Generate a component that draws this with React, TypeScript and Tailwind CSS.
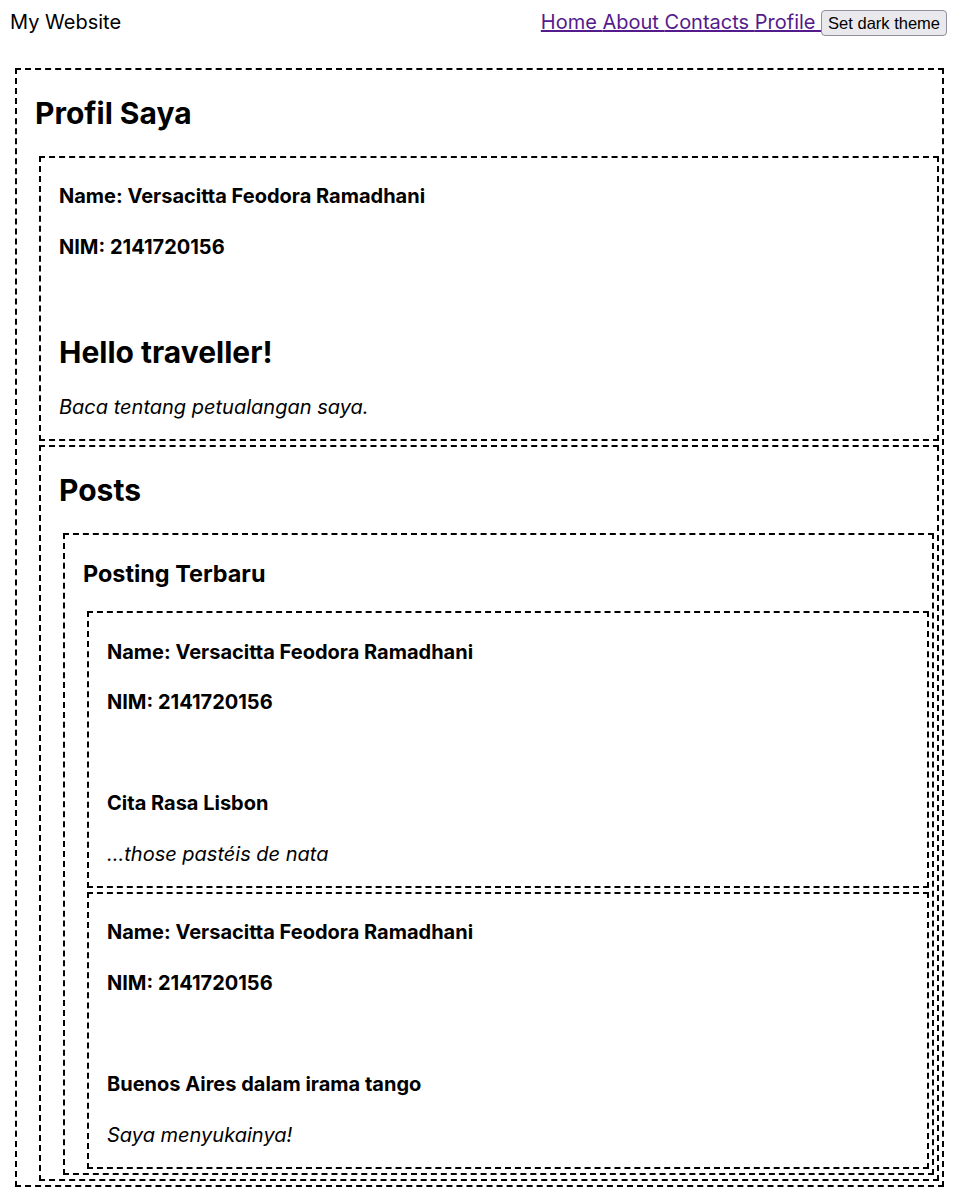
import type { ReactNode } from "react"

const profile = { name: "Versacitta Feodora Ramadhani", nim: "2141720156" }

const posts = [
    { title: "Cita Rasa Lisbon", body: "...those pastéis de nata" },
    { title: "Buenos Aires dalam irama tango", body: "Saya menyukainya!" },
]

function Box({ children }: { children: ReactNode }) {
    return <div className="border-2 border-dashed border-black ml-[4px] mr-[3px] my-[4px] pl-[18px]">{children}</div>
}

function Identity() {
    return (
        <>
            <h4 className="text-[20px] leading-[normal] font-bold my-[26.6px]">Name: {profile.name}</h4>
            <h4 className="text-[20px] leading-[normal] font-bold my-[26.6px]">NIM: {profile.nim}</h4>
            <div className="text-[20px] leading-[normal]">
                <br />
            </div>
        </>
    )
}

export default function App() {
    return (
        <div className="font-['Inter',sans-serif] text-black bg-white min-h-screen">
            {/* top bar */}
            <header className="flex justify-between items-baseline px-[10px] pt-[7px] h-[36px]">
                <span className="text-[20px] leading-[30px]">My Website</span>
                <nav className="text-[20px] leading-[30px]">
                    <a href="#" className="text-[#551a8b] underline">{"Home "}</a>
                    <a href="#" className="text-[#551a8b] underline">{"About "}</a>
                    <a href="#" className="text-[#551a8b] underline">{"Contacts "}</a>
                    <a href="#" className="text-[#551a8b] underline">{"Profile "}</a>
                    <button className="font-['Liberation_Sans',Arial,sans-serif] text-[16.5px] leading-[20px] bg-[#e9e9ed] border border-[#8f8f9d] rounded-[4px] px-[6px] py-[2px] text-black align-baseline">
                        Set dark theme
                    </button>
                </nav>
            </header>

            <div className="pl-[11px] pr-[10px] pt-[28px]">
                <Box>
                    <h2 className="text-[30px] leading-[normal] font-bold my-[24.9px]">Profil Saya</h2>
                    <Box>
                        <Identity />
                        <h2 className="text-[30px] leading-[normal] font-bold my-[24.9px]">Hello traveller!</h2>
                        <p className="text-[20px] leading-[normal] italic my-[20px]">Baca tentang petualangan saya.</p>
                    </Box>
                    <Box>
                        <h2 className="text-[30px] leading-[normal] font-bold my-[24.9px]">Posts</h2>
                        <Box>
                            <h3 className="text-[23.4px] leading-[normal] font-bold my-[23.4px]">Posting Terbaru</h3>
                            {posts.map((post) => (
                                <Box key={post.title}>
                                    <Identity />
                                    <h4 className="text-[20px] leading-[normal] font-bold my-[26.6px]">{post.title}</h4>
                                    <p className="text-[20px] leading-[normal] italic my-[20px]">{post.body}</p>
                                </Box>
                            ))}
                        </Box>
                    </Box>
                </Box>
            </div>
        </div>
    )
}
